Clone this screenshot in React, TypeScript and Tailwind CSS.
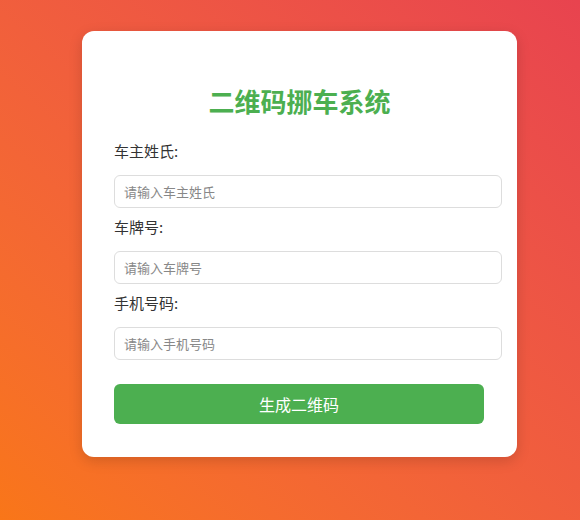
import React from "react";

export default function App() {
  const font = { fontFamily: '"Noto Sans CJK SC", "Noto Sans", sans-serif' };
  const inputCls =
    "block mt-[12px] w-[388px] h-[33px] border border-[#ddd] rounded-[6px] px-[9px] text-[13px] placeholder:text-[#888] outline-none";
  const labelCls = "block text-[15px] leading-[24px] text-[#333]";
  return (
    <div
      className="w-[580px] h-[520px] bg-gradient-to-tr from-[#f97618] to-[#e8434f] pt-[31px] pl-[82px]"
      style={font}
    >
      <div className="w-[435px] bg-white rounded-[12px] shadow-[0_4px_14px_rgba(0,0,0,0.15)] pt-[54px] pl-[32px] pr-[15px] pb-[33px]">
        <h2 className="text-[26px] leading-[31px] font-bold text-[#4caf50] text-center pr-[17px]">
          二维码挪车系统
        </h2>
        <label className={`${labelCls} mt-[23px]`}>车主姓氏:</label>
        <input className={inputCls} placeholder="请输入车主姓氏" />
        <label className={`${labelCls} mt-[7px]`}>车牌号:</label>
        <input className={inputCls} placeholder="请输入车牌号" />
        <label className={`${labelCls} mt-[7px]`}>手机号码:</label>
        <input className={inputCls} placeholder="请输入手机号码" />
        <button className="block mt-[24px] w-[370px] h-[40px] bg-[#4caf50] text-white text-[16px] rounded-[6px]">
          生成二维码
        </button>
      </div>
    </div>
  );
}
